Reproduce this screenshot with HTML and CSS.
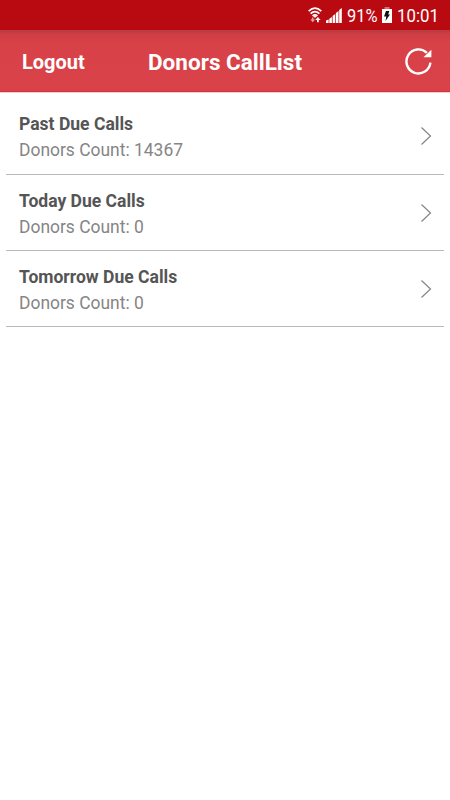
FILE: index.html
```html
<!DOCTYPE html>
<html lang="en">
<head>
<meta charset="utf-8">
<title>Donors CallList</title>
<link rel="stylesheet" href="styles.css">
</head>
<body>
<div class="status">
  <svg class="wifi" width="14" height="16" viewBox="0 0 14 16" fill="none" stroke="#fff" stroke-width="1.700">
    <path d="M.7 4.200Q7-1.800 13.300 4.200M2.600 6.700Q7 2.400 11.400 6.700M4.600 9Q7 6.800 9.400 9"/>
    <path d="M5.300 9h3.400L7 11z" fill="#fff" stroke="none"/>
    <path d="M9.900 15.200v-3.200" stroke-width="1.800"/>
    <path d="M7.200 13 9.900 10l2.700 3z" fill="#fff" stroke="none"/>
    <path d="M4.700 10.500v2.500" stroke="#ec9ba0"/>
    <path d="M2.300 12.600h4.800L4.700 15.300z" fill="#ec9ba0" stroke="none"/>
  </svg>
  <svg class="signal" width="16" height="15" viewBox="0 0 16 15" fill="#fff">
    <path d="M0 12.500 2.600 11.500V15H0zM3.300 10.800 5.900 9v6H3.300zM6.600 8 9.200 6v9H6.600zM9.900 5 12.500 3v12H9.900zM13.200 2 15.800 0v15h-2.600z"/>
  </svg>
  <span class="percent">91%</span>
  <svg class="battery" width="10" height="16" viewBox="0 0 10 16">
    <path d="M2.500 0h5v2h-5z" fill="#e06a70"/>
    <path d="M0 2h10v14H0z" fill="#fff"/>
    <path d="M4 4h3.300L6.200 7.500H8L3.500 14 4.300 9.500H2z" fill="#111"/>
  </svg>
  <span class="clock">10:01</span>
</div>
<header class="bar">
  <span class="logout">Logout</span>
  <h1 class="title">Donors CallList</h1>
  <svg class="refresh" width="28" height="28" viewBox="0 0 28 28" fill="none" stroke="#fff" stroke-width="2.400">
    <path d="M26 15.400A12 12 0 1 1 22.500 5.600"/>
    <path d="M27 2.400V10H19z" fill="#fff" stroke="none"/>
  </svg>
</header>
<main class="list">
  <div class="row first">
    <div><div class="name">Past Due Calls</div><div class="count">Donors Count: 14367</div></div>
    <svg class="chevron" width="12" height="20" viewBox="0 0 12 20"><path d="M1.500 1.500 10.500 10l-9 8.500"/></svg>
  </div>
  <div class="row">
    <div><div class="name">Today Due Calls</div><div class="count">Donors Count: 0</div></div>
    <svg class="chevron" width="12" height="20" viewBox="0 0 12 20"><path d="M1.500 1.500 10.500 10l-9 8.500"/></svg>
  </div>
  <div class="row">
    <div><div class="name">Tomorrow Due Calls</div><div class="count">Donors Count: 0</div></div>
    <svg class="chevron" width="12" height="20" viewBox="0 0 12 20"><path d="M1.500 1.500 10.500 10l-9 8.500"/></svg>
  </div>
</main>
</body>
</html>
```
FILE: styles.css
```css
* { box-sizing: border-box; }
body {
  margin: 0;
  min-height: 800px;
  background: #fff;
  font-family: Roboto, "Liberation Sans", sans-serif;
}
.status {
  display: flex;
  align-items: center;
  justify-content: flex-end;
  height: 30px;
  padding-right: 11px;
  background: #ba0a11;
  color: #fff;
  line-height: 30px;
  white-space: nowrap;
}
.wifi { margin-right: 4px; }
.signal { margin-right: 5px; }
.status span { padding-top: 1px; font-size: 18.500px; transform-origin: 0 50%; }
.percent { width: 31px; margin-right: 4px; transform: scaleX(.89); }
.battery { margin-right: 5px; }
.clock { width: 42px; transform: scaleX(.91); }
.bar {
  display: grid;
  grid-template-columns: 126px 1fr 28px;
  align-items: center;
  height: 62px;
  padding: 1px 18px 0 22px;
  background: linear-gradient(#b93b40 0, #cd3e44 4px, #d74147 12px, #d94248 100%);
  border-bottom: 1px solid #d2343b;
  box-shadow: 0 1px #f5cdcf;
  color: #fff;
}
.logout { padding-top: 2px; font-size: 20px; font-weight: 700; line-height: 24px; }
.title { margin: 0; padding-top: 2px; font-size: 22.500px; font-weight: 700; line-height: 26px; }
.refresh { transform: translate(.4px, .3px); }
.list { padding: 7px 6px 0; }
.row {
  display: flex;
  justify-content: space-between;
  height: 76px;
  padding: 14px 12px 0 13px;
  border-bottom: 1px solid #bbb8b9;
}
.row.first { padding-top: 13px; }
.name { color: #555; font-size: 17.550px; font-weight: 700; line-height: 24px; }
.count { margin-top: 2px; color: #858585; font-size: 17.450px; line-height: 24px; }
.chevron { margin-top: 13.500px; fill: none; stroke: #858585; stroke-width: 1.200; }
.first .chevron { margin-top: 14px; }
```
